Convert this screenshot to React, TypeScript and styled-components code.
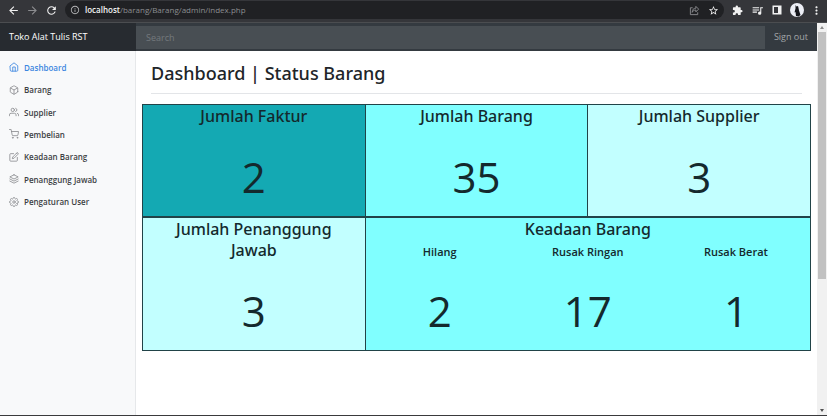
import React from "react";
import styled, { createGlobalStyle, css } from "styled-components";
import { FiHome, FiBox, FiUsers, FiShoppingCart, FiEdit, FiLayers, FiSettings } from "react-icons/fi";
import {
  MdArrowBack, MdArrowForward, MdRefresh, MdInfoOutline, MdStarOutline, MdExtension, MdQueueMusic, MdMoreVert,
} from "react-icons/md";

const GlobalStyle = createGlobalStyle`
  *, *::before, *::after { box-sizing: border-box; }
  body { margin: 0; background: #fff; color: #212529; font-family: "Open Sans", "Noto Sans", sans-serif; }
  h1, h2, h3, p, ul { margin: 0; padding: 0; }
  button, input { font: inherit; border: 0; }
`;

const Window = styled.div`
  min-height: 100vh;
  display: flex;
  flex-direction: column;
  border-bottom: 1px solid #3a3a3c;
`;

const BrowserBar = styled.header`
  height: 23px;
  display: flex;
  align-items: center;
  padding: 0 4px 2px 7px;
  background: #35363a;
  border-bottom: 1px solid #4b4d50;
`;

const IconButton = styled.button<{ $dim?: boolean; $gap?: number }>`
  display: flex;
  flex: none;
  padding: 0;
  margin-right: ${(p) => p.$gap ?? 0}px;
  background: none;
  color: ${(p) => (p.$dim ? "#8c8d90" : "#f1f1f1")};
`;

const AddressBar = styled.div`
  flex: 1;
  height: 18px;
  display: flex;
  align-items: center;
  padding: 0 5px;
  margin: 0 8px 0 7px;
  border-radius: 9px;
  background: #202124;
  color: #b4b5b7;
`;

const Url = styled.span`
  flex: 1;
  margin-left: 5px;
  font-size: 8px;
  line-height: 12px;
  color: #8b8d90;
  b { font-weight: 600; color: #f4f4f4; }
`;

const Viewport = styled.div`
  flex: 1;
  display: flex;
`;

const Page = styled.div`
  flex: 1;
  min-width: 0;
  display: flex;
  flex-direction: column;
`;

const Navbar = styled.nav`
  height: 28px;
  display: flex;
  align-items: center;
  background: #343a40;
`;

const Brand = styled.a`
  flex: none;
  width: 136px;
  align-self: stretch;
  padding-left: 9px;
  font-size: 9px;
  line-height: 28px;
  color: #fff;
  text-decoration: none;
  background: #272b30;
`;

const Search = styled.input`
  flex: 1;
  min-width: 0;
  height: 23px;
  padding: 0 10px;
  font-size: 9px;
  background: #484e53;
  color: #fff;
  &::placeholder { color: #74797d; opacity: 1; }
`;

const SignOut = styled.a`
  padding: 0 9px;
  font-size: 9px;
  line-height: 28px;
  color: #a3a6a9;
  text-decoration: none;
`;

const Columns = styled.div`
  flex: 1;
  display: flex;
`;

const Sidebar = styled.aside`
  flex: none;
  width: 136px;
  padding-top: 5px;
  background: #f8f9fa;
  border-right: 1px solid #e6e8ea;
`;

const Menu = styled.ul`
  height: 157px;
  display: grid;
  grid-auto-rows: 1fr;
  list-style: none;
`;

const MenuLink = styled.a<{ $active?: boolean }>`
  height: 100%;
  display: flex;
  align-items: center;
  gap: 5px;
  padding-left: 9px;
  font-size: 8px;
  font-weight: 600;
  color: ${(p) => (p.$active ? "#3b86e0" : "#3c3f43")};
  text-decoration: none;
  svg { color: ${(p) => (p.$active ? "#3b86e0" : "#8b8d90")}; }
`;

const Main = styled.main`
  flex: 1;
  padding: 10px 6px 0;
`;

const Title = styled.h1`
  margin: 0 9px 10px;
  padding-bottom: 7px;
  font-family: "Noto Sans", "Open Sans", sans-serif;
  font-size: 18px;
  line-height: 25px;
  font-weight: 500;
  border-bottom: 1px solid #e3e5e8;
`;

const Stats = styled.section`
  display: grid;
  grid-template-columns: repeat(3, 1fr);
  grid-template-rows: 113px 134px;
  border-right: 1px solid #214348;
`;

const tones = { deep: "#14a9b3", bright: "#80ffff", pale: "#c2ffff" };

const Card = styled.article<{ $tone: keyof typeof tones; $wide?: boolean }>`
  border: 1px solid #214348;
  border-right: 0;
  background: ${(p) => tones[p.$tone]};
  text-align: center;
  color: #14292d;
  display: flex;
  flex-direction: column;
  justify-content: space-between;
  ${(p) => p.$wide && css`grid-column: span 2;`}
`;

const CardTitle = styled.h2`
  padding: 1px 24px 0;
  font-family: "Noto Sans", "Open Sans", sans-serif;
  font-size: 16px;
  line-height: 21px;
  font-weight: 500;
`;

const Value = styled.p`
  padding-bottom: 12px;
  font-size: 42px;
  line-height: 54px;
`;

const Conditions = styled.div`
  flex: 1;
  display: grid;
  grid-template-columns: repeat(3, 1fr);
`;

const Condition = styled.div`
  display: flex;
  flex-direction: column;
  justify-content: space-between;
`;

const ConditionTitle = styled.h3`
  padding-top: 4px;
  font-size: 11px;
  line-height: 15px;
  font-weight: 600;
`;

const Scrollbar = styled.div`
  flex: none;
  width: 10px;
  display: flex;
  flex-direction: column;
  align-items: center;
  background: #f1f1f1;
`;

const ScrollArrow = styled.span<{ $down?: boolean }>`
  height: 9px;
  display: flex;
  align-items: center;
  &::before {
    content: "";
    border: 2px solid transparent;
    ${(p) => (p.$down ? "border-top: 3px solid #505050; border-bottom: 0;" : "border-bottom: 3px solid #8a8a8a; border-top: 0;")}
  }
`;

const ScrollTrack = styled.div`
  flex: 1;
  width: 8px;
`;

const ScrollThumb = styled.div`
  height: 66%;
  background: #c1c1c1;
`;

const ShareIcon = () => (
  <svg width="11" height="11" viewBox="0 0 24 24" fill="none" stroke="currentColor" strokeWidth="2">
    <path d="M8 6H3v15h16v-5" />
    <path d="M15 3l6 6-6 6v-4c-4 0-6 1-8 5 0-6 3-9 8-9z" strokeLinejoin="round" />
  </svg>
);

const SidePanelIcon = () => (
  <svg width="10" height="10" viewBox="0 0 20 20">
    <path fill="currentColor" fillRule="evenodd" d="M1 1h18v18H1zM4 4v12h8V4z" />
  </svg>
);

const Avatar = () => (
  <svg width="14" height="14" viewBox="0 0 28 28">
    <circle cx="14" cy="14" r="14" fill="#eceef5" />
    <path fill="#15161c" d="M11 4l2 3 3-1 1 4 1 5 3 9-4 3-5-1-1-8-2 1 2-8z" />
  </svg>
);

const menu = [
  { label: "Dashboard", Icon: FiHome },
  { label: "Barang", Icon: FiBox },
  { label: "Supplier", Icon: FiUsers },
  { label: "Pembelian", Icon: FiShoppingCart },
  { label: "Keadaan Barang", Icon: FiEdit },
  { label: "Penanggung Jawab", Icon: FiLayers },
  { label: "Pengaturan User", Icon: FiSettings },
];

const conditions = [
  { label: "Hilang", value: 2 },
  { label: "Rusak Ringan", value: 17 },
  { label: "Rusak Berat", value: 1 },
];

const Stat = ({ tone, label, value }: { tone: keyof typeof tones; label: string; value: number }) => (
  <Card $tone={tone}>
    <CardTitle>{label}</CardTitle>
    <Value>{value}</Value>
  </Card>
);

export default function App() {
  return (
    <Window>
      <GlobalStyle />
      <BrowserBar>
        <IconButton aria-label="Back" $gap={6}><MdArrowBack size={13} /></IconButton>
        <IconButton aria-label="Forward" $dim $gap={6}><MdArrowForward size={13} /></IconButton>
        <IconButton aria-label="Reload"><MdRefresh size={13} /></IconButton>
        <AddressBar>
          <MdInfoOutline size={10} />
          <Url><b>localhost</b>/barang/Barang/admin/index.php</Url>
          <IconButton aria-label="Share" $dim $gap={8}><ShareIcon /></IconButton>
          <IconButton aria-label="Bookmark"><MdStarOutline size={11} /></IconButton>
        </AddressBar>
        <IconButton aria-label="Extensions" $gap={8}><MdExtension size={11} /></IconButton>
        <IconButton aria-label="Media" $gap={8}><MdQueueMusic size={13} /></IconButton>
        <IconButton aria-label="Side panel" $gap={8}><SidePanelIcon /></IconButton>
        <IconButton aria-label="Profile" $gap={6}><Avatar /></IconButton>
        <IconButton aria-label="Menu"><MdMoreVert size={13} /></IconButton>
      </BrowserBar>
      <Viewport>
        <Page>
          <Navbar>
            <Brand href="#">Toko Alat Tulis RST</Brand>
            <Search type="text" placeholder="Search" aria-label="Search" />
            <SignOut href="#">Sign out</SignOut>
          </Navbar>
          <Columns>
            <Sidebar>
              <Menu>
                {menu.map(({ label, Icon }, i) => (
                  <li key={label}>
                    <MenuLink href="#" $active={i === 0}><Icon size={10} />{label}</MenuLink>
                  </li>
                ))}
              </Menu>
            </Sidebar>
            <Main>
              <Title>Dashboard | Status Barang</Title>
              <Stats>
                <Stat tone="deep" label="Jumlah Faktur" value={2} />
                <Stat tone="bright" label="Jumlah Barang" value={35} />
                <Stat tone="pale" label="Jumlah Supplier" value={3} />
                <Stat tone="pale" label="Jumlah Penanggung Jawab" value={3} />
                <Card $tone="bright" $wide>
                  <CardTitle>Keadaan Barang</CardTitle>
                  <Conditions>
                    {conditions.map(({ label, value }) => (
                      <Condition key={label}>
                        <ConditionTitle>{label}</ConditionTitle>
                        <Value>{value}</Value>
                      </Condition>
                    ))}
                  </Conditions>
                </Card>
              </Stats>
            </Main>
          </Columns>
        </Page>
        <Scrollbar>
          <ScrollArrow />
          <ScrollTrack><ScrollThumb /></ScrollTrack>
          <ScrollArrow $down />
        </Scrollbar>
      </Viewport>
    </Window>
  );
}
